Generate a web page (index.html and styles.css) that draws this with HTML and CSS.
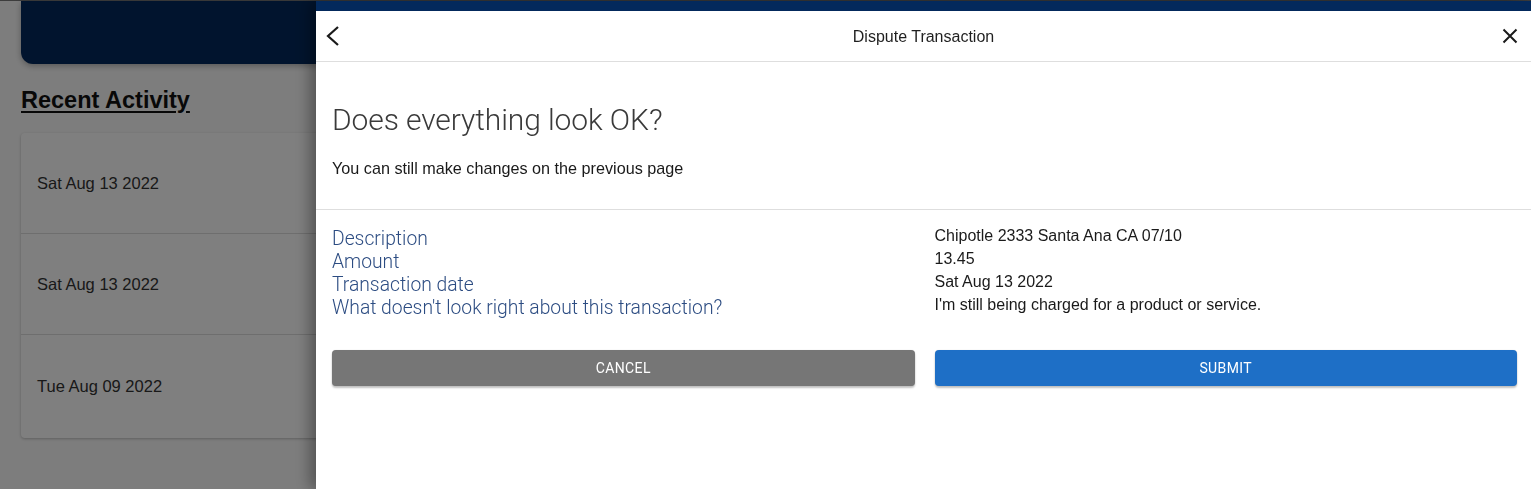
FILE: index.html
```html
<!DOCTYPE html>
<html lang="en">
<head>
<meta charset="utf-8">
<title>Dispute Transaction</title>
<link rel="stylesheet" href="styles.css">
</head>
<body>
<div class="topline"></div>
<main class="page">
  <div class="hero"></div>
  <h2 class="section-title">Recent Activity</h2>
  <ul class="activity">
    <li class="activity-row">Sat Aug 13 2022</li>
    <li class="activity-row">Sat Aug 13 2022</li>
    <li class="activity-row">Tue Aug 09 2022</li>
  </ul>
</main>

<div class="backdrop"></div>

<aside class="drawer">
  <header class="drawer-head">
    <button class="icon-btn back" aria-label="Back">
      <svg width="14" height="20" viewBox="0 0 14 20"><polyline points="12,1 2,10 12,19" fill="none" stroke="#1a1a1a" stroke-width="2.2"/></svg>
    </button>
    <div class="drawer-title">Dispute Transaction</div>
    <button class="icon-btn close" aria-label="Close">
      <svg width="16" height="16" viewBox="0 0 16 16"><path d="M1.5 1.5 L14.5 14.5 M14.5 1.5 L1.5 14.5" fill="none" stroke="#1a1a1a" stroke-width="2"/></svg>
    </button>
  </header>

  <section class="intro">
    <h1 class="intro-title">Does everything look OK?</h1>
    <p class="intro-sub">You can still make changes on the previous page</p>
  </section>

  <section class="summary">
    <div class="summary-grid">
      <div class="labels">
        <div>Description</div>
        <div>Amount</div>
        <div>Transaction date</div>
        <div>What doesn't look right about this transaction?</div>
      </div>
      <div class="values">
        <div>Chipotle 2333 Santa Ana CA 07/10</div>
        <div>13.45</div>
        <div>Sat Aug 13 2022</div>
        <div>I'm still being charged for a product or service.</div>
      </div>
    </div>
    <div class="actions">
      <button class="btn btn-cancel">Cancel</button>
      <button class="btn btn-submit">Submit</button>
    </div>
  </section>
</aside>
</body>
</html>
```

FILE: styles.css
```css
* { box-sizing: border-box; }

html, body {
  margin: 0;
  padding: 0;
  height: 100%;
  overflow: hidden;
}

body {
  background: #fbfbfb;
  font-family: "Liberation Sans", Arial, sans-serif;
  color: #222;
}

.topline {
  height: 1px;
  background: #7a7a7a;
}

.page {
  padding: 0 21px;
}

.hero {
  height: 63px;
  background: #03295c;
  border-radius: 0 0 12px 12px;
  box-shadow: 0 2px 6px rgba(0,0,0,0.3);
}

.section-title {
  margin: 22px 0 19px;
  font-size: 23.5px;
  line-height: 28px;
  font-weight: 700;
  text-decoration: underline;
  text-underline-offset: 3px;
  color: #111;
}

.activity {
  list-style: none;
  margin: 0;
  padding: 0;
  background: #fff;
  border-radius: 4px;
  box-shadow: 0 1px 3px rgba(0,0,0,0.25);
}

.activity-row {
  height: 101px;
  display: flex;
  align-items: center;
  padding: 0 16px;
  font-size: 16.5px;
  color: #333;
  border-bottom: 1px solid #dcdcdc;
}

.activity-row:last-child { border-bottom: none; height: 103px; }

.backdrop {
  position: fixed;
  inset: 0;
  background: rgba(0,0,0,0.5);
}

.drawer {
  position: fixed;
  top: 1px;
  left: 316px;
  right: 0;
  bottom: 0;
  background: #fff;
  border-top: 10px solid #03295c;
  box-shadow: -6px 0 14px rgba(0,0,0,0.35);
}

.drawer-head {
  height: 51px;
  display: grid;
  grid-template-columns: 48px 1fr 48px;
  align-items: center;
  border-bottom: 1px solid #dedede;
}

.icon-btn {
  background: none;
  border: 0;
  padding: 0;
  display: flex;
  align-items: center;
  cursor: pointer;
}

.back { padding-left: 10px; justify-content: flex-start; }
.close { justify-content: flex-end; padding-right: 13px; }

.drawer-title {
  text-align: center;
  padding-top: 2px;
  font-size: 16px;
  color: #1f1f1f;
}

.intro {
  padding: 40px 14px 31px 16px;
  border-bottom: 1px solid #dedede;
}

.intro-title {
  margin: 0;
  font-family: Roboto, "Liberation Sans", sans-serif;
  font-weight: 300;
  font-size: 30px;
  line-height: 36px;
  letter-spacing: -0.1px;
  color: #3a3a3a;
}

.intro-sub {
  margin: 20px 0 0;
  font-size: 16.2px;
  line-height: 20px;
  color: #1a1a1a;
}

.summary {
  padding: 14px 14px 0 16px;
}

.summary-grid {
  display: grid;
  grid-template-columns: 1fr 1fr;
  column-gap: 20px;
}

.labels {
  padding-top: 3px;
  font-family: Roboto, "Liberation Sans", sans-serif;
  font-weight: 300;
  font-size: 19.3px;
  line-height: 23px;
  color: #2c4c82;
}

.values {
  font-size: 16px;
  line-height: 23px;
  color: #1a1a1a;
}

.actions {
  margin-top: 31px;
  display: grid;
  grid-template-columns: 1fr 1fr;
  column-gap: 20px;
}

.btn {
  height: 36px;
  border: 0;
  border-radius: 4px;
  color: #fff;
  font-family: Roboto, "Liberation Sans", sans-serif;
  font-size: 14px;
  letter-spacing: 0.4px;
  text-transform: uppercase;
  box-shadow: 0 2px 2px rgba(0,0,0,0.24), 0 0 1px rgba(0,0,0,0.2);
  cursor: pointer;
}

.btn-cancel { background: #767676; }
.btn-submit { background: #1e6fc6; }
```
